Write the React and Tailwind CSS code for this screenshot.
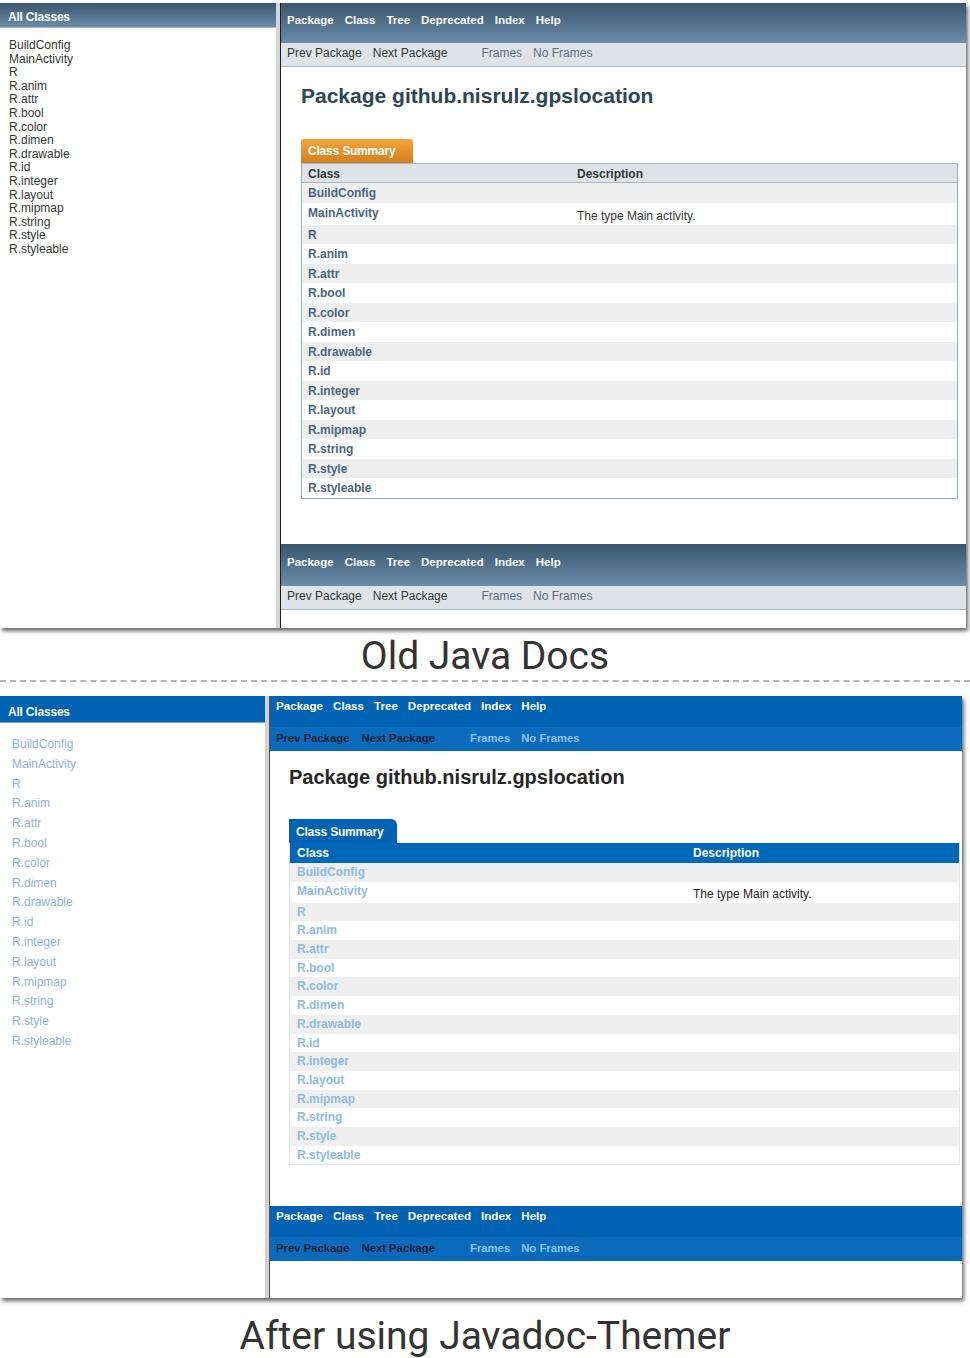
const classes = ["BuildConfig", "MainActivity", "R", "R.anim", "R.attr", "R.bool", "R.color", "R.dimen", "R.drawable", "R.id", "R.integer", "R.layout", "R.mipmap", "R.string", "R.style", "R.styleable"];

const navItems = ["Package", "Class", "Tree", "Deprecated", "Index", "Help"];

const OldNav = ({ top }) => {
  return (
    <div>
      <div className={`${top ? "h-[40px] pt-[10px]" : "h-[42px] pt-[11px]"} bg-gradient-to-b from-[#3b566e] to-[#6a8dab] pl-[6px] flex gap-[11px] text-[11.5px] font-bold text-white leading-[14px]`}>
        {navItems.map((n) => <span key={n}>{n}</span>)}
      </div>
      <div className="h-[24px] pt-[3px] bg-[#dee3e9] border-b border-[#a9b6c4] pl-[6px] flex text-[12px] leading-[14px] text-[#353833]">
        <span>Prev Package</span>
        <span className="ml-[11px]">Next Package</span>
        <span className="ml-[34px] text-[#5b6f82]">Frames</span>
        <span className="ml-[11px] text-[#5b6f82]">No Frames</span>
      </div>
    </div>
  );
};

const NewNav = () => {
  return (
    <div>
      <div className="h-[31px] pt-[3px] bg-[#0062b3] pl-[6px] flex gap-[10px] text-[11.6px] font-bold text-white leading-[14px]">
        {navItems.map((n) => <span key={n}>{n}</span>)}
      </div>
      <div className="h-[24px] pt-[4px] bg-[#0a6bbd] pl-[6px] flex text-[11.3px] font-bold leading-[14px] text-[#0f2236]">
        <span>Prev Package</span>
        <span className="ml-[12px]">Next Package</span>
        <span className="ml-[35px] text-[#8cc3f2]">Frames</span>
        <span className="ml-[11px] text-[#8cc3f2]">No Frames</span>
      </div>
    </div>
  );
};

const OldShot = () => {
  return (
    <div className="mt-[3px] flex h-[625px] w-[966px] bg-white shadow-[2px_3px_4px_rgba(0,0,0,0.6)]">
      <aside className="w-[276px] shrink-0">
        <div className="h-[25px] pt-[7px] pl-[8px] bg-gradient-to-b from-[#3b566e] to-[#6a8dab] border-b border-[#a9b6c4] text-[12px] leading-[14px] font-bold text-white tracking-[-0.2px]">All Classes</div>
        <ul className="pl-[9px] pt-[11px] text-[12px] leading-[13.6px] text-[#353833]">
          {classes.map((c) => <li key={c}>{c}</li>)}
        </ul>
      </aside>
      <div className="w-[5px] shrink-0 bg-[#d5d5d5] border-r border-[#1f1f1f]" />
      <main className="flex-1 flex flex-col">
        <OldNav top />
        <h1 className="mt-[17px] pl-[20px] text-[21px] leading-[24px] font-bold text-[#2c4557]">Package github.nisrulz.gpslocation</h1>
        <div className="mt-[31px] ml-[20px] mr-[8px]">
          <div className="w-[112px] h-[24px] pt-[5px] pl-[7px] rounded-t-[3px] bg-gradient-to-b from-[#f5a63a] to-[#d07f1c] text-[12px] leading-[14px] font-bold text-white tracking-[-0.2px]">Class Summary</div>
          <div className="border-x border-b border-[#9eadc0]">
            <div className="h-[20px] pt-[3px] flex bg-[#dee3e9] border-y border-[#a9b6c4] text-[12px] leading-[14px] font-bold text-[#353833]">
              <span className="w-[275px] pl-[6px]">Class</span>
              <span>Description</span>
            </div>
            {classes.map((c, i) => (
              <div key={c} className={`${c === "MainActivity" ? "h-[22px]" : "h-[19.5px]"} flex items-start pt-[3px] text-[12px] leading-[14px] ${i % 2 === 0 ? "bg-[#eeeeef]" : "bg-white"}`}>
                <span className="w-[275px] pl-[6px] font-bold text-[#4a6782]">{c}</span>
                {c === "MainActivity" && <span className="pt-[3px] text-[#353833]">The type Main activity.</span>}
              </div>
            ))}
          </div>
        </div>
        <div className="mt-[45px]">
          <OldNav />
        </div>
      </main>
    </div>
  );
};

const NewShot = () => {
  return (
    <div className="mt-[14px] flex h-[602px] w-[962px] bg-white shadow-[2px_3px_4px_rgba(0,0,0,0.6)]">
      <aside className="w-[265px] shrink-0">
        <div className="h-[27px] pt-[9px] pl-[8px] bg-[#0062b3] border-b border-[#7aa6d0] text-[12px] leading-[14px] font-bold text-white tracking-[-0.2px]">All Classes</div>
        <ul className="pl-[12px] pt-[12px] text-[12px] leading-[19.8px] text-[#8ab3de]">
          {classes.map((c) => <li key={c}>{c}</li>)}
        </ul>
      </aside>
      <div className="w-[5px] shrink-0 bg-[#d2d2d2] border-r border-[#555]" />
      <main className="flex-1 flex flex-col">
        <NewNav />
        <h1 className="mt-[14px] pl-[19px] text-[20px] leading-[24px] font-bold text-[#262626]">Package github.nisrulz.gpslocation</h1>
        <div className="mt-[30px] ml-[19px] mr-[2px]">
          <div className="w-[108px] h-[24px] pt-[6px] pl-[7px] rounded-tr-[6px] bg-[#0062b3] text-[12px] leading-[14px] font-bold text-white tracking-[-0.2px]">Class Summary</div>
          <div className="border-x border-b border-[#e6e6e6]">
            <div className="h-[20px] pt-[3px] flex bg-[#0068b8] text-[12px] leading-[14px] font-bold text-white">
              <span className="w-[403px] pl-[7px]">Class</span>
              <span>Description</span>
            </div>
            {classes.map((c, i) => (
              <div key={c} className={`${c === "MainActivity" ? "h-[21px]" : "h-[18.7px]"} flex items-start pt-[2px] text-[12px] leading-[14px] ${i % 2 === 0 ? "bg-[#efefef]" : "bg-white"}`}>
                <span className="w-[403px] pl-[7px] font-bold text-[#8dbbe6]">{c}</span>
                {c === "MainActivity" && <span className="pt-[3px] text-[#222]">The type Main activity.</span>}
              </div>
            ))}
          </div>
        </div>
        <div className="mt-[41px]">
          <NewNav />
        </div>
      </main>
    </div>
  );
};

export default function App() {
  return (
    <div className="w-[970px] h-[1358px] bg-white font-['Liberation_Sans',Arial,sans-serif] overflow-hidden">
      <OldShot />
      <p className="mt-[4px] text-center font-['Roboto',sans-serif] text-[39px] leading-[48px] text-[#333]">Old Java Docs</p>
      <div className="border-t-2 border-dashed border-[#b3b3b3]" />
      <NewShot />
      <p className="mt-[14px] text-center font-['Roboto',sans-serif] text-[39px] leading-[48px] text-[#333]">After using Javadoc-Themer</p>
    </div>
  );
}
